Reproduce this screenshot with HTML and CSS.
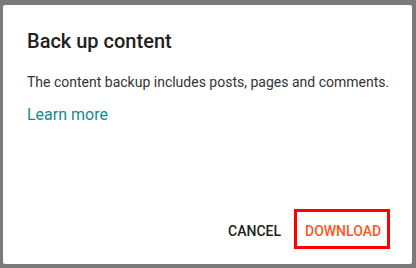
FILE: index.html
```html
<!DOCTYPE html>
<html>
<head>
<meta charset="utf-8">
<link rel="stylesheet" href="styles.css">
</head>
<body>
<div class="dialog">
  <h1 class="title">Back up content</h1>
  <p class="text">The content backup includes posts, pages and comments.</p>
  <a class="link" href="#">Learn more</a>
  <div class="actions">
    <button class="btn cancel">Cancel</button>
    <button class="btn download">Download</button>
  </div>
</div>
</body>
</html>
```
FILE: styles.css
```css
html, body {
  margin: 0;
  padding: 0;
  width: 416px;
  height: 268px;
  background: #7a7a7a;
  overflow: hidden;
}
body {
  padding: 5px 4px 4px 3px;
  box-sizing: border-box;
  font-family: Roboto, "Liberation Sans", sans-serif;
}
.dialog {
  background: #fff;
  border-radius: 2px;
  width: 409px;
  height: 259px;
  box-sizing: border-box;
  padding: 24px 24px 15px 24px;
  display: flex;
  flex-direction: column;
}
.title {
  margin: 0;
  font-size: 20px;
  line-height: 24px;
  font-weight: 500;
  color: #212121;
}
.text {
  margin: 19px 0 0 0;
  font-size: 14px;
  line-height: 20px;
  color: #333;
  white-space: nowrap;
}
.link {
  margin-top: 13px;
  font-size: 16px;
  line-height: 20px;
  color: #15898c;
  text-decoration: none;
  align-self: flex-start;
}
.actions {
  margin-top: auto;
  display: flex;
  justify-content: flex-end;
  align-items: center;
  gap: 5px;
  margin-right: -2px;
}
.btn {
  background: none;
  border: none;
  font-family: Roboto, "Liberation Sans", sans-serif;
  font-size: 14px;
  font-weight: 500;
  text-transform: uppercase;
  padding: 0 8px;
  height: 40px;
  line-height: 20px;
  cursor: pointer;
}
.cancel {
  color: #212121;
  padding-top: 4px;
}
.download {
  color: #ff5722;
  border: 3px solid #f00;
  padding: 4px 8px 0 8px;
  width: 96px;
}
```
